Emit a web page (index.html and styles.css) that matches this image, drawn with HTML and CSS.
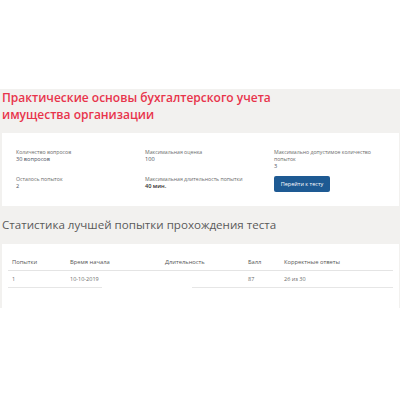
FILE: index.html
```html
<!DOCTYPE html>
<html lang="ru">
<head>
<meta charset="utf-8">
<link rel="stylesheet" href="styles.css">
</head>
<body>
<div class="top-space"></div>
<section class="panel">
  <h1 class="title">Практические основы бухгалтерского учета<br>имущества организации</h1>
  <div class="card info">
    <div class="cell">
      <div class="label">Количество вопросов</div>
      <div class="value">30 вопросов</div>
    </div>
    <div class="cell">
      <div class="label">Максимальная оценка</div>
      <div class="value">100</div>
    </div>
    <div class="cell">
      <div class="label">Максимально допустимое количество<br>попыток</div>
      <div class="value">3</div>
    </div>
    <div class="cell">
      <div class="label">Осталось попыток</div>
      <div class="value">2</div>
    </div>
    <div class="cell">
      <div class="label">Максимальная длительность попытки</div>
      <div class="value strong">40 мин.</div>
    </div>
    <div class="cell">
      <button class="btn">Перейти к тесту</button>
    </div>
  </div>
  <h2 class="subtitle">Статистика лучшей попытки прохождения теста</h2>
  <div class="card table-card">
    <div class="trow thead">
      <div>Попытки</div>
      <div>Время начала</div>
      <div>Длительность</div>
      <div>Балл</div>
      <div>Корректные ответы</div>
    </div>
    <div class="hline"></div>
    <div class="trow tbody">
      <div>1</div>
      <div>10-10-2019</div>
      <div></div>
      <div>87</div>
      <div>26 из 30</div>
    </div>
    <div class="row-line"><div class="seg seg-a"></div><div class="seg seg-b"></div></div>
  </div>
</section>
</body>
</html>
```
FILE: styles.css
```css
* { box-sizing: border-box; }
html, body { margin: 0; padding: 0; background: #ffffff; }
body { font-family: "Open Sans", "Liberation Sans", sans-serif; color: #444; width: 400px; }

.top-space { height: 89px; }

.panel {
  background: #f2f1ef;
  padding: 0 1px 0 2px;
}

.title {
  margin: 0;
  height: 44px;
  font-size: 12px;
  line-height: 17px;
  font-weight: 600;
  color: #e8344b;
}

.card { background: #ffffff; }

.info {
  display: grid;
  grid-template-columns: 129px 129px 1fr;
  row-gap: 6px;
  padding: 16px 10px 14px 14px;
}

.label {
  font-size: 5.2px;
  line-height: 7px;
  color: #6a6a6a;
}
.value {
  font-size: 5.6px;
  line-height: 7px;
  font-weight: 400;
  color: #4a5060;
}
.value.strong { font-weight: 600; color: #2e2e2e; }

.btn {
  display: block;
  height: 16px;
  width: 56px;
  padding: 0;
  border: 0;
  border-radius: 2px;
  background: #1e5a93;
  color: #ffffff;
  font-family: "Open Sans", "Liberation Sans", sans-serif;
  font-size: 5.5px;
  line-height: 16px;
  text-align: center;
}

.subtitle {
  margin: 0;
  height: 38px;
  font-size: 11.6px;
  line-height: 38px;
  font-weight: 400;
  color: #5a5a5a;
}

.table-card {
  padding: 10px 6px 20px 4px;
}

.trow {
  display: grid;
  grid-template-columns: 58px 95px 83px 36px 1fr;
  padding-left: 2px;
  font-size: 5.5px;
  line-height: 16px;
  color: #6b6b6b;
}
.trow > div { padding-left: 4px; }
.thead { color: #555; font-size: 5.8px; }

.hline { height: 1px; background: #e4e4e4; margin-left: 2px; }

.row-line { display: flex; gap: 90px; margin-left: 2px; }
.seg { height: 1px; background: #e6e6e6; }
.seg-a { width: 94px; }
.seg-b { flex: 1; }
```
